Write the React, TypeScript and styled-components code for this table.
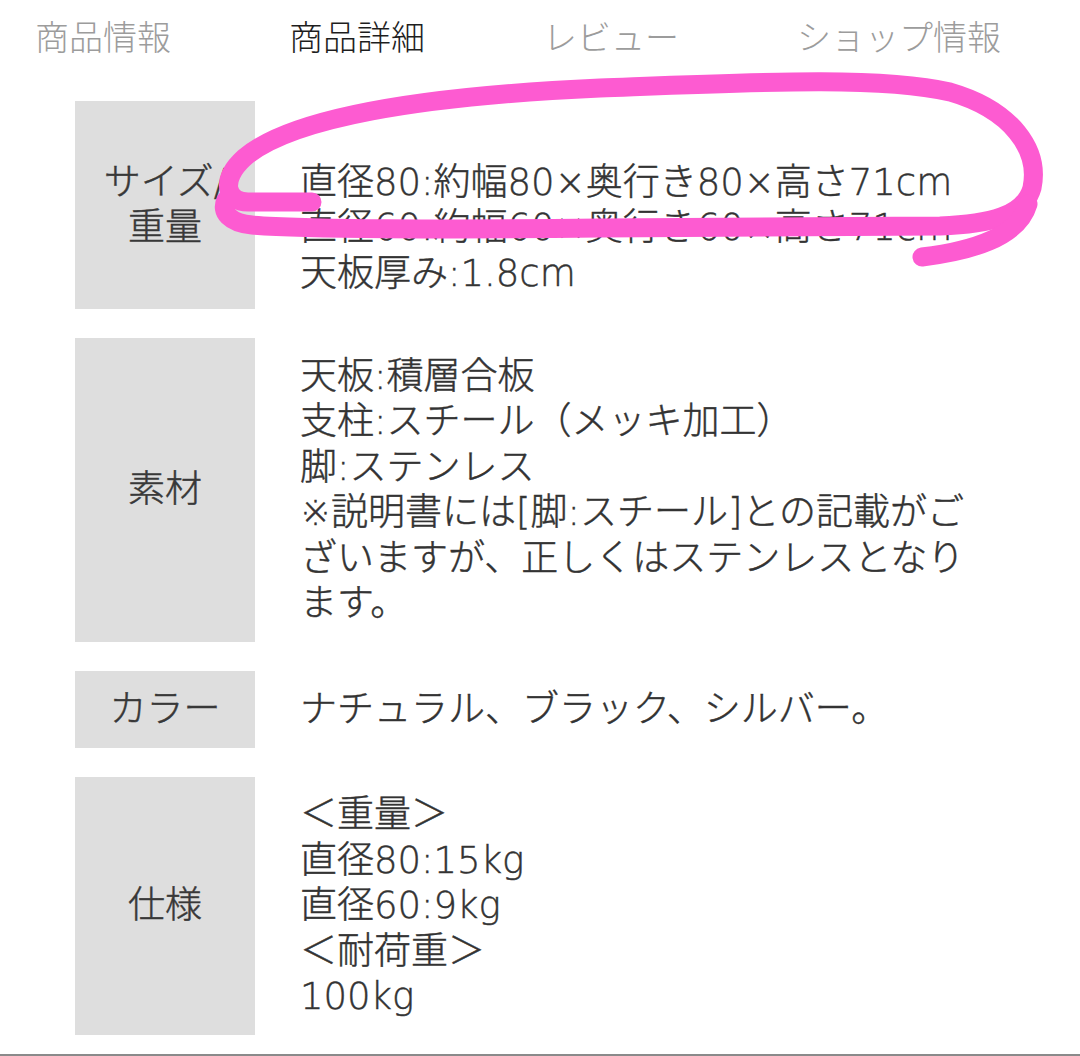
import React from "react";
import styled, { createGlobalStyle } from "styled-components";

const Global = createGlobalStyle`
  html, body { margin: 0; padding: 0; background: #ffffff; }
  body { font-family: "Noto Sans CJK JP", sans-serif; }
`;

const Page = styled.div`
  position: relative;
  width: 1080px;
  background: #fff;
`;

const TabBar = styled.nav`
  display: flex;
  align-items: center;
  gap: 118px;
  height: 72px;
  padding-left: 35px;
  font-family: "Noto Sans CJK JP", sans-serif;
  font-size: 34px;
  font-weight: 300;
  line-height: 1;
`;

const Tab = styled.span<{ $active?: boolean }>`
  color: ${(p) => (p.$active ? "#1e1e1e" : "#9c9c9c")};
  white-space: nowrap;
`;

const Table = styled.div`
  display: flex;
  flex-direction: column;
  gap: 29px;
  padding: 29px 95px 0 75px;
`;

const Row = styled.div`
  display: grid;
  grid-template-columns: 180px 1fr;
  column-gap: 45px;
  font-family: "DejaVu Sans", "Noto Sans CJK JP", sans-serif;
  font-size: 37px;
  font-weight: 300;
  line-height: 45.5px;
  color: #333333;
  -webkit-text-stroke: 0.45px currentColor;
`;

const Label = styled.div`
  display: flex;
  align-items: center;
  justify-content: center;
  text-align: center;
  background: #dedede;
  white-space: pre-line;
  color: #383838;
`;

const Value = styled.div<{ $compact?: boolean }>`
  padding: ${(p) => (p.$compact ? "13px 0" : "15.5px 0")};
  white-space: pre-line;
`;

const Footer = styled.div`
  margin-top: 19px;
  height: 2px;
  background: #8a8a8a;
`;

const Annotation = styled.svg`
  position: absolute;
  top: 0;
  left: 0;
  pointer-events: none;
`;

const tabs = ["商品情報", "商品詳細", "レビュー", "ショップ情報"];

const rows = [
  {
    label: "サイズ/\n重量",
    value:
      "\n直径80:約幅80×奥行き80×高さ71cm\n直径60:約幅60×奥行き60×高さ71cm\n天板厚み:1.8cm",
    compact: true,
  },
  {
    label: "素材",
    value:
      "天板:積層合板\n支柱:スチール（メッキ加工）\n脚:ステンレス\n※説明書には[脚:スチール]との記載がございますが、正しくはステンレスとなります。",
  },
  { label: "カラー", value: "ナチュラル、ブラック、シルバー。" },
  {
    label: "仕様",
    value: "＜重量＞\n直径80:15kg\n直径60:9kg\n＜耐荷重＞\n100kg",
  },
];

export default function App() {
  return (
    <Page>
      <Global />
      <TabBar>
        {tabs.map((t, i) => (
          <Tab key={t} $active={i === 1}>
            {t}
          </Tab>
        ))}
      </TabBar>
      <Table>
        {rows.map((r) => (
          <Row key={r.label}>
            <Label>{r.label}</Label>
            <Value $compact={r.compact}>{r.value}</Value>
          </Row>
        ))}
      </Table>
      <Footer />
      <Annotation width="1080" height="300" viewBox="0 0 1080 300">
        <path
          d="M 312 202 L 248 202 C 226 202 220 180 244 158 C 290 118 420 96 600 88 C 760 82 880 76 950 92 C 1012 110 1040 150 1032 188 C 1024 216 990 224 940 226 L 600 228 C 450 230 300 229 252 225 C 230 223 220 212 226 200"
          fill="none"
          stroke="#fd5bd1"
          strokeWidth="19"
          strokeLinecap="round"
          strokeLinejoin="round"
        />
        <path
          d="M 1028 204 C 1018 238 970 251 922 257"
          fill="none"
          stroke="#fd5bd1"
          strokeWidth="19"
          strokeLinecap="round"
        />
      </Annotation>
    </Page>
  );
}
